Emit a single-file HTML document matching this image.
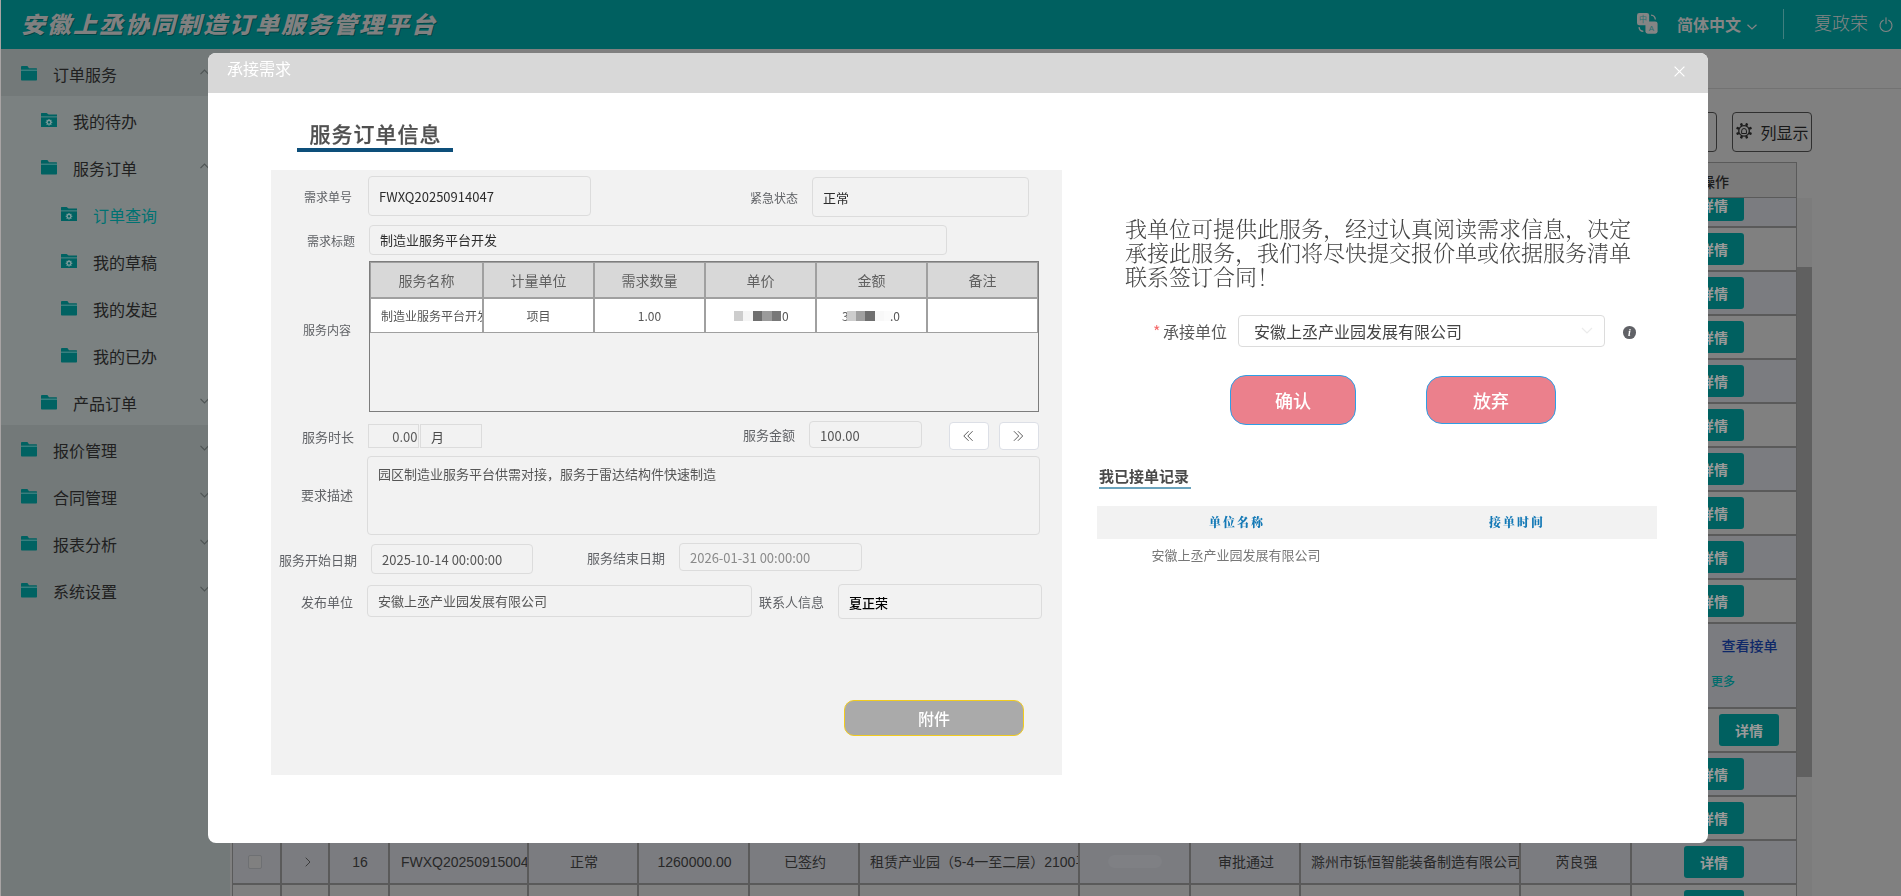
<!DOCTYPE html>
<html lang="zh-CN">
<head>
<meta charset="utf-8">
<title>安徽上丞协同制造订单服务管理平台</title>
<style>
*{box-sizing:border-box;margin:0;padding:0}
html,body{width:1901px;height:896px;overflow:hidden;background:#808080}
body{position:relative;font-family:"Noto Sans CJK SC","Liberation Sans",sans-serif;font-size:14px;color:#333}
.a{position:absolute;white-space:nowrap}
svg{position:absolute;overflow:visible}
/* header */
#hdr{left:0;top:0;width:1901px;height:49px;background:#006060}
#edge{left:0;top:0;width:1px;height:896px;background:#a8a4a4;z-index:3}
#hdr .ttl{left:21px;top:4px;font:italic 900 24px/38px "Noto Sans CJK SC","Liberation Sans",sans-serif;letter-spacing:2px;color:#808080;text-shadow:1px 1px 0 rgba(0,0,0,.3);transform:scaleY(.95);transform-origin:0 100%}
#hdr .lang{left:1677px;top:11px;font:700 16px/26px "Noto Sans CJK SC","Liberation Sans",sans-serif;color:#858585}
#hdr .user{left:1814px;top:8.5px;font:300 18px/26px "Noto Sans CJK SC","Liberation Sans",sans-serif;color:#858585}
#hdr .div{left:1783px;top:9px;width:1px;height:30px;background:#407f7f}
/* sidebar */
#side{left:1px;top:49px;width:229px;height:847px;background:#737979;z-index:1}
#side .sub{left:0;top:47px;width:229px;height:329px;background:#7b8181}
.mi{left:0;width:207px;height:47px;font:400 16px/47px "Noto Sans CJK SC","Liberation Sans",sans-serif;color:#202020}
.mi.act{color:#007272}
.mi svg{top:21px}
.mi span{position:absolute;top:2px}
/* main bg */
#main{left:208px;top:49px;width:1693px;height:847px;background:#808080;overflow:hidden}
.bt{font:400 14px/20px "Liberation Sans","Noto Sans CJK SC",sans-serif;color:#282828}
.vl{width:2px;background:#5a5a5a}
.hl{height:2px;background:#5a5a5a}
.row{left:24px;width:1565px}
.btn{width:60px;height:32px;border-radius:3px;background:#006060;color:#9a9a9a;font:700 14px/32px "Noto Sans CJK SC","Liberation Sans",sans-serif;text-align:center}
/* modal */
#modal{left:208px;top:53px;width:1500px;height:790px;background:#fff;border-radius:8px;overflow:hidden;will-change:transform;z-index:2}
#mh{left:0;top:0;width:1500px;height:40px;background:#d8d8d8}
#mh .t{left:19px;top:4px;font:400 16px/22px "Noto Sans CJK SC","Liberation Sans",sans-serif;color:#fff}
#lp{left:63px;top:117px;width:791px;height:605px;background:#f2f2f2}
.lb{font:400 12px/18px "Noto Sans CJK SC","Liberation Sans",sans-serif;color:#606266}
.lb13{font-size:13px}
.in{border:1px solid #dcdcdc;border-radius:4px;background:#f2f2f2;font:400 13px/18px "Noto Sans CJK SC","Liberation Sans",sans-serif;color:#2c2c2c}
.in span{position:absolute;left:10px}
.th{background:#d8d8d8;border:1px solid #a0a0a0;font:400 14px/20px "Noto Sans CJK SC","Liberation Sans",sans-serif;color:#606060;text-align:center;height:36px;padding-top:6.5px}
.td{background:#fff;border:1px solid #a0a0a0;font:400 12px/18px "Noto Sans CJK SC","Liberation Sans",sans-serif;color:#555;text-align:center;height:35px;padding-top:8px;overflow:hidden}
.px{position:absolute;height:10px}
</style>
</head>
<body>
<div id="hdr" class="a">
<div class="a ttl">安徽上丞协同制造订单服务管理平台</div>
<svg style="left:1637px;top:13px" width="20.6" height="20.8" viewBox="0 0 22 22">
<rect x="0" y="0" width="13" height="13" rx="2.5" fill="#858585"/>
<rect x="9" y="9" width="13" height="13" rx="2.5" fill="#858585"/>
<path d="M15 2.2 a5 5 0 0 1 4.6 4.6" fill="none" stroke="#858585" stroke-width="1.4"/>
<path d="M2.2 15 a5 5 0 0 0 4.6 4.6" fill="none" stroke="#858585" stroke-width="1.4"/>
<text x="6.5" y="9.7" font-size="8.5" font-weight="400" text-anchor="middle" fill="#2a7070" font-family='"Noto Sans CJK SC",sans-serif'>中</text>
<text x="15.5" y="19" font-size="8.5" font-weight="400" text-anchor="middle" fill="#2a7070" font-family='"Liberation Sans",sans-serif'>A</text>
</svg>
<div class="a lang">简体中文</div>
<svg style="left:1747px;top:24px" width="10" height="6" viewBox="0 0 10 6"><path d="M0.5 0.7 L5 5 L9.5 0.7" fill="none" stroke="#858585" stroke-width="1.2"/></svg>
<div class="a div"></div>
<div class="a user">夏政荣</div>
<svg style="left:1879px;top:16.5px" width="14" height="15" viewBox="0 0 14 15"><path d="M4.3 3.2 A6 6 0 1 0 9.7 3.2" fill="none" stroke="#858585" stroke-width="1.1" stroke-linecap="round"/><path d="M7 0.8 V6.6" stroke="#858585" stroke-width="1.1" stroke-linecap="round"/></svg>
</div>
<div id="side" class="a"><div class="a sub"></div>
<div class="a mi" style="top:0px"><svg style="left:20px;top:16.6px" width="16" height="14.5" viewBox="0 0 16 14.8" preserveAspectRatio="none"><path d="M0 .9 Q0 0 .9 0 H6.4 L8 2.2 H15.4 Q16 2.2 16 2.8 V3.9 H0 Z" fill="#006262"/><path d="M0 3.9 H16 V5 H0 Z" fill="#2f8080"/><path d="M0 5 H16 V14 Q16 14.8 15.2 14.8 H.8 Q0 14.8 0 14 Z" fill="#006262"/></svg><span style="left:52px">订单服务</span><svg style="left:198.5px;top:20px" width="9" height="6" viewBox="0 0 9 6"><path d="M.5 5.2 L4.5 1 L8.5 5.2" fill="none" stroke="#4e5454" stroke-width="1.1"/></svg></div>
<div class="a mi" style="top:47px"><svg style="left:40px;top:16.9px" width="16" height="14" viewBox="0 0 16 14"><path d="M0 .5 Q0 0 .5 0 H5.6 L7.6 1.6 H16 V3.4 H0 Z" fill="#006262"/><path d="M0 3.4 H16 V4.4 H0 Z" fill="#2f8080"/><path d="M0 4.4 H16 V14 H0 Z" fill="#006262"/><g transform="translate(8,9.3)"><circle cx="0" cy="0" r="1.9" fill="none" stroke="#809e9e" stroke-width="1.2"/><rect x="-.55" y="-3.3" width="1.1" height="1.2" fill="#809e9e" transform="rotate(0)"/><rect x="-.55" y="-3.3" width="1.1" height="1.2" fill="#809e9e" transform="rotate(45)"/><rect x="-.55" y="-3.3" width="1.1" height="1.2" fill="#809e9e" transform="rotate(90)"/><rect x="-.55" y="-3.3" width="1.1" height="1.2" fill="#809e9e" transform="rotate(135)"/><rect x="-.55" y="-3.3" width="1.1" height="1.2" fill="#809e9e" transform="rotate(180)"/><rect x="-.55" y="-3.3" width="1.1" height="1.2" fill="#809e9e" transform="rotate(225)"/><rect x="-.55" y="-3.3" width="1.1" height="1.2" fill="#809e9e" transform="rotate(270)"/><rect x="-.55" y="-3.3" width="1.1" height="1.2" fill="#809e9e" transform="rotate(315)"/></g></svg><span style="left:72px">我的待办</span></div>
<div class="a mi" style="top:94px"><svg style="left:40px;top:16.6px" width="16" height="14.5" viewBox="0 0 16 14.8" preserveAspectRatio="none"><path d="M0 .9 Q0 0 .9 0 H6.4 L8 2.2 H15.4 Q16 2.2 16 2.8 V3.9 H0 Z" fill="#006262"/><path d="M0 3.9 H16 V5 H0 Z" fill="#2f8080"/><path d="M0 5 H16 V14 Q16 14.8 15.2 14.8 H.8 Q0 14.8 0 14 Z" fill="#006262"/></svg><span style="left:72px">服务订单</span><svg style="left:198.5px;top:20px" width="9" height="6" viewBox="0 0 9 6"><path d="M.5 5.2 L4.5 1 L8.5 5.2" fill="none" stroke="#4e5454" stroke-width="1.1"/></svg></div>
<div class="a mi act" style="top:141px"><svg style="left:60px;top:16.9px" width="16" height="14" viewBox="0 0 16 14"><path d="M0 .5 Q0 0 .5 0 H5.6 L7.6 1.6 H16 V3.4 H0 Z" fill="#006262"/><path d="M0 3.4 H16 V4.4 H0 Z" fill="#2f8080"/><path d="M0 4.4 H16 V14 H0 Z" fill="#006262"/><g transform="translate(8,9.3)"><circle cx="0" cy="0" r="1.9" fill="none" stroke="#809e9e" stroke-width="1.2"/><rect x="-.55" y="-3.3" width="1.1" height="1.2" fill="#809e9e" transform="rotate(0)"/><rect x="-.55" y="-3.3" width="1.1" height="1.2" fill="#809e9e" transform="rotate(45)"/><rect x="-.55" y="-3.3" width="1.1" height="1.2" fill="#809e9e" transform="rotate(90)"/><rect x="-.55" y="-3.3" width="1.1" height="1.2" fill="#809e9e" transform="rotate(135)"/><rect x="-.55" y="-3.3" width="1.1" height="1.2" fill="#809e9e" transform="rotate(180)"/><rect x="-.55" y="-3.3" width="1.1" height="1.2" fill="#809e9e" transform="rotate(225)"/><rect x="-.55" y="-3.3" width="1.1" height="1.2" fill="#809e9e" transform="rotate(270)"/><rect x="-.55" y="-3.3" width="1.1" height="1.2" fill="#809e9e" transform="rotate(315)"/></g></svg><span style="left:92px">订单查询</span></div>
<div class="a mi" style="top:188px"><svg style="left:60px;top:16.9px" width="16" height="14" viewBox="0 0 16 14"><path d="M0 .5 Q0 0 .5 0 H5.6 L7.6 1.6 H16 V3.4 H0 Z" fill="#006262"/><path d="M0 3.4 H16 V4.4 H0 Z" fill="#2f8080"/><path d="M0 4.4 H16 V14 H0 Z" fill="#006262"/><g transform="translate(8,9.3)"><circle cx="0" cy="0" r="1.9" fill="none" stroke="#809e9e" stroke-width="1.2"/><rect x="-.55" y="-3.3" width="1.1" height="1.2" fill="#809e9e" transform="rotate(0)"/><rect x="-.55" y="-3.3" width="1.1" height="1.2" fill="#809e9e" transform="rotate(45)"/><rect x="-.55" y="-3.3" width="1.1" height="1.2" fill="#809e9e" transform="rotate(90)"/><rect x="-.55" y="-3.3" width="1.1" height="1.2" fill="#809e9e" transform="rotate(135)"/><rect x="-.55" y="-3.3" width="1.1" height="1.2" fill="#809e9e" transform="rotate(180)"/><rect x="-.55" y="-3.3" width="1.1" height="1.2" fill="#809e9e" transform="rotate(225)"/><rect x="-.55" y="-3.3" width="1.1" height="1.2" fill="#809e9e" transform="rotate(270)"/><rect x="-.55" y="-3.3" width="1.1" height="1.2" fill="#809e9e" transform="rotate(315)"/></g></svg><span style="left:92px">我的草稿</span></div>
<div class="a mi" style="top:235px"><svg style="left:60px;top:16.6px" width="16" height="14.5" viewBox="0 0 16 14.8" preserveAspectRatio="none"><path d="M0 .9 Q0 0 .9 0 H6.4 L8 2.2 H15.4 Q16 2.2 16 2.8 V3.9 H0 Z" fill="#006262"/><path d="M0 3.9 H16 V5 H0 Z" fill="#2f8080"/><path d="M0 5 H16 V14 Q16 14.8 15.2 14.8 H.8 Q0 14.8 0 14 Z" fill="#006262"/></svg><span style="left:92px">我的发起</span></div>
<div class="a mi" style="top:282px"><svg style="left:60px;top:16.6px" width="16" height="14.5" viewBox="0 0 16 14.8" preserveAspectRatio="none"><path d="M0 .9 Q0 0 .9 0 H6.4 L8 2.2 H15.4 Q16 2.2 16 2.8 V3.9 H0 Z" fill="#006262"/><path d="M0 3.9 H16 V5 H0 Z" fill="#2f8080"/><path d="M0 5 H16 V14 Q16 14.8 15.2 14.8 H.8 Q0 14.8 0 14 Z" fill="#006262"/></svg><span style="left:92px">我的已办</span></div>
<div class="a mi" style="top:329px"><svg style="left:40px;top:16.6px" width="16" height="14.5" viewBox="0 0 16 14.8" preserveAspectRatio="none"><path d="M0 .9 Q0 0 .9 0 H6.4 L8 2.2 H15.4 Q16 2.2 16 2.8 V3.9 H0 Z" fill="#006262"/><path d="M0 3.9 H16 V5 H0 Z" fill="#2f8080"/><path d="M0 5 H16 V14 Q16 14.8 15.2 14.8 H.8 Q0 14.8 0 14 Z" fill="#006262"/></svg><span style="left:72px">产品订单</span><svg style="left:198.5px;top:20px" width="9" height="6" viewBox="0 0 9 6"><path d="M.5 .8 L4.5 5 L8.5 .8" fill="none" stroke="#4e5454" stroke-width="1.1"/></svg></div>
<div class="a mi" style="top:376px"><svg style="left:20px;top:16.6px" width="16" height="14.5" viewBox="0 0 16 14.8" preserveAspectRatio="none"><path d="M0 .9 Q0 0 .9 0 H6.4 L8 2.2 H15.4 Q16 2.2 16 2.8 V3.9 H0 Z" fill="#006262"/><path d="M0 3.9 H16 V5 H0 Z" fill="#2f8080"/><path d="M0 5 H16 V14 Q16 14.8 15.2 14.8 H.8 Q0 14.8 0 14 Z" fill="#006262"/></svg><span style="left:52px">报价管理</span><svg style="left:198.5px;top:20px" width="9" height="6" viewBox="0 0 9 6"><path d="M.5 .8 L4.5 5 L8.5 .8" fill="none" stroke="#4e5454" stroke-width="1.1"/></svg></div>
<div class="a mi" style="top:423px"><svg style="left:20px;top:16.6px" width="16" height="14.5" viewBox="0 0 16 14.8" preserveAspectRatio="none"><path d="M0 .9 Q0 0 .9 0 H6.4 L8 2.2 H15.4 Q16 2.2 16 2.8 V3.9 H0 Z" fill="#006262"/><path d="M0 3.9 H16 V5 H0 Z" fill="#2f8080"/><path d="M0 5 H16 V14 Q16 14.8 15.2 14.8 H.8 Q0 14.8 0 14 Z" fill="#006262"/></svg><span style="left:52px">合同管理</span><svg style="left:198.5px;top:20px" width="9" height="6" viewBox="0 0 9 6"><path d="M.5 .8 L4.5 5 L8.5 .8" fill="none" stroke="#4e5454" stroke-width="1.1"/></svg></div>
<div class="a mi" style="top:470px"><svg style="left:20px;top:16.6px" width="16" height="14.5" viewBox="0 0 16 14.8" preserveAspectRatio="none"><path d="M0 .9 Q0 0 .9 0 H6.4 L8 2.2 H15.4 Q16 2.2 16 2.8 V3.9 H0 Z" fill="#006262"/><path d="M0 3.9 H16 V5 H0 Z" fill="#2f8080"/><path d="M0 5 H16 V14 Q16 14.8 15.2 14.8 H.8 Q0 14.8 0 14 Z" fill="#006262"/></svg><span style="left:52px">报表分析</span><svg style="left:198.5px;top:20px" width="9" height="6" viewBox="0 0 9 6"><path d="M.5 .8 L4.5 5 L8.5 .8" fill="none" stroke="#4e5454" stroke-width="1.1"/></svg></div>
<div class="a mi" style="top:517px"><svg style="left:20px;top:16.6px" width="16" height="14.5" viewBox="0 0 16 14.8" preserveAspectRatio="none"><path d="M0 .9 Q0 0 .9 0 H6.4 L8 2.2 H15.4 Q16 2.2 16 2.8 V3.9 H0 Z" fill="#006262"/><path d="M0 3.9 H16 V5 H0 Z" fill="#2f8080"/><path d="M0 5 H16 V14 Q16 14.8 15.2 14.8 H.8 Q0 14.8 0 14 Z" fill="#006262"/></svg><span style="left:52px">系统设置</span><svg style="left:198.5px;top:20px" width="9" height="6" viewBox="0 0 9 6"><path d="M.5 .8 L4.5 5 L8.5 .8" fill="none" stroke="#4e5454" stroke-width="1.1"/></svg></div>
</div>
<div id="edge" class="a"></div>
<div id="main" class="a">
<div class="a" style="left:0;top:39px;width:1693px;height:1px;background:#727272"></div>
<div class="a" style="left:1444px;top:63px;width:65px;height:40px;border:1px solid #303030;border-radius:4px"></div>
<div class="a" style="left:1524px;top:63px;width:80px;height:40px;border:1px solid #303030;border-radius:4px"></div>
<svg style="left:1528px;top:74px" width="16" height="16" viewBox="-8 -8 16 16"><g transform="translate(0.05,-0.1)"><circle cx="0" cy="0" r="5.3" fill="none" stroke="#1c1c1c" stroke-width="1.3"/><rect x="-1.2" y="-8.1" width="2.4" height="2.7" rx=".4" fill="#1c1c1c" transform="rotate(22.5)"/><rect x="-1.2" y="-8.1" width="2.4" height="2.7" rx=".4" fill="#1c1c1c" transform="rotate(67.5)"/><rect x="-1.2" y="-8.1" width="2.4" height="2.7" rx=".4" fill="#1c1c1c" transform="rotate(112.5)"/><rect x="-1.2" y="-8.1" width="2.4" height="2.7" rx=".4" fill="#1c1c1c" transform="rotate(157.5)"/><rect x="-1.2" y="-8.1" width="2.4" height="2.7" rx=".4" fill="#1c1c1c" transform="rotate(202.5)"/><rect x="-1.2" y="-8.1" width="2.4" height="2.7" rx=".4" fill="#1c1c1c" transform="rotate(247.5)"/><rect x="-1.2" y="-8.1" width="2.4" height="2.7" rx=".4" fill="#1c1c1c" transform="rotate(292.5)"/><rect x="-1.2" y="-8.1" width="2.4" height="2.7" rx=".4" fill="#1c1c1c" transform="rotate(337.5)"/><path d="M-2.4 2.6 V0 A2.4 2.4 0 0 1 2.4 0 V2.6 Z" fill="none" stroke="#1c1c1c" stroke-width="1"/></g></svg>
<div class="a" style="left:1552.5px;top:71px;font:400 16px/24px 'Noto Sans CJK SC','Liberation Sans',sans-serif;color:#181818">列显示</div>
<div class="a" style="left:24px;top:113px;width:1565px;height:36px;background:#7a7a7a;border-top:1px solid #5a5a5a;border-bottom:1px solid #5a5a5a"></div>
<div class="a row" style="top:149px;height:28px;background:#7b7c80"></div>
<div class="a hl" style="left:24px;top:177px;width:1565px"></div>
<div class="a row" style="top:179px;height:42px;background:#808080"></div>
<div class="a hl" style="left:24px;top:221px;width:1565px"></div>
<div class="a row" style="top:223px;height:42px;background:#7b7c80"></div>
<div class="a hl" style="left:24px;top:265px;width:1565px"></div>
<div class="a row" style="top:267px;height:42px;background:#808080"></div>
<div class="a hl" style="left:24px;top:309px;width:1565px"></div>
<div class="a row" style="top:311px;height:42px;background:#7b7c80"></div>
<div class="a hl" style="left:24px;top:353px;width:1565px"></div>
<div class="a row" style="top:355px;height:42px;background:#808080"></div>
<div class="a hl" style="left:24px;top:397px;width:1565px"></div>
<div class="a row" style="top:399px;height:42px;background:#7b7c80"></div>
<div class="a hl" style="left:24px;top:441px;width:1565px"></div>
<div class="a row" style="top:443px;height:42px;background:#808080"></div>
<div class="a hl" style="left:24px;top:485px;width:1565px"></div>
<div class="a row" style="top:487px;height:42px;background:#7b7c80"></div>
<div class="a hl" style="left:24px;top:529px;width:1565px"></div>
<div class="a row" style="top:531px;height:42px;background:#808080"></div>
<div class="a hl" style="left:24px;top:573px;width:1565px"></div>
<div class="a row" style="top:575px;height:83px;background:#7b7c80"></div>
<div class="a hl" style="left:24px;top:658px;width:1565px"></div>
<div class="a row" style="top:660px;height:42px;background:#808080"></div>
<div class="a hl" style="left:24px;top:702px;width:1565px"></div>
<div class="a row" style="top:704px;height:42px;background:#7b7c80"></div>
<div class="a hl" style="left:24px;top:746px;width:1565px"></div>
<div class="a row" style="top:748px;height:42px;background:#808080"></div>
<div class="a hl" style="left:24px;top:790px;width:1565px"></div>
<div class="a row" style="top:792px;height:42px;background:#7b7c80"></div>
<div class="a hl" style="left:24px;top:834px;width:1565px"></div>
<div class="a row" style="top:836px;height:42px;background:#808080"></div>
<div class="a hl" style="left:24px;top:878px;width:1565px"></div>
<div class="a vl" style="left:24px;top:113px;height:740px;width:1px"></div>
<div class="a vl" style="left:72px;top:113px;height:740px"></div>
<div class="a vl" style="left:120px;top:113px;height:740px"></div>
<div class="a vl" style="left:180px;top:113px;height:740px"></div>
<div class="a vl" style="left:319px;top:113px;height:740px"></div>
<div class="a vl" style="left:429px;top:113px;height:740px"></div>
<div class="a vl" style="left:540px;top:113px;height:740px"></div>
<div class="a vl" style="left:650px;top:113px;height:740px"></div>
<div class="a vl" style="left:870px;top:113px;height:740px"></div>
<div class="a vl" style="left:981px;top:113px;height:740px"></div>
<div class="a vl" style="left:1091px;top:113px;height:740px"></div>
<div class="a vl" style="left:1311px;top:113px;height:740px"></div>
<div class="a vl" style="left:1422px;top:113px;height:740px"></div>
<div class="a" style="left:1588px;top:113px;width:1px;height:740px;background:#5a5a5a"></div>
<div class="a" style="left:1589px;top:149px;width:15px;height:700px;background:#7c7c7c"></div>
<div class="a" style="left:1589px;top:218px;width:15px;height:510px;background:#606060"></div>
<div class="a btn" style="left:1476px;top:140px">详情</div>
<div class="a" style="left:1424px;top:114px;width:164px;height:35px;background:#7a7a7a;border-bottom:1px solid #5a5a5a"></div>
<div class="a" style="left:1493px;top:121.5px;font:500 14px/20px 'Noto Sans CJK SC','Liberation Sans',sans-serif;color:#1c1c1c">操作</div>
<div class="a btn" style="left:1476px;top:184px">详情</div>
<div class="a btn" style="left:1476px;top:228px">详情</div>
<div class="a btn" style="left:1476px;top:272px">详情</div>
<div class="a btn" style="left:1476px;top:316px">详情</div>
<div class="a btn" style="left:1476px;top:360px">详情</div>
<div class="a btn" style="left:1476px;top:404px">详情</div>
<div class="a btn" style="left:1476px;top:448px">详情</div>
<div class="a btn" style="left:1476px;top:492px">详情</div>
<div class="a btn" style="left:1476px;top:536px">详情</div>
<div class="a" style="left:1513.5px;top:586px;font:500 14px/20px 'Noto Sans CJK SC','Liberation Sans',sans-serif;color:#0e2868">查看接单</div>
<div class="a" style="left:1503px;top:623px;font:500 12px/18px 'Noto Sans CJK SC','Liberation Sans',sans-serif;color:#006c6c">更多</div>
<div class="a btn" style="left:1511px;top:665px">详情</div>
<div class="a btn" style="left:1476px;top:709px">详情</div>
<div class="a btn" style="left:1476px;top:753px">详情</div>
<div class="a btn" style="left:1476px;top:797px">详情</div>
<div class="a btn" style="left:1476px;top:841px">详情</div>
<div class="a" style="left:40px;top:806px;width:14px;height:14px;border:1px solid #6e7073;border-radius:2px;background:#808080"></div>
<svg style="left:97px;top:808px" width="6" height="10" viewBox="0 0 6 10"><path d="M.7 .7 L5 5 L.7 9.3" fill="none" stroke="#3c3c3c" stroke-width="1"/></svg>
<div class="a bt" style="left:123px;top:803px;width:58px;text-align:center;overflow:hidden">16</div>
<div class="a bt" style="left:183px;top:803px;width:136px;overflow:hidden;padding-left:10px">FWXQ20250915004</div>
<div class="a bt" style="left:322px;top:803px;width:108px;text-align:center;overflow:hidden">正常</div>
<div class="a bt" style="left:432px;top:803px;width:109px;text-align:center;overflow:hidden">1260000.00</div>
<div class="a bt" style="left:543px;top:803px;width:108px;text-align:center;overflow:hidden">已签约</div>
<div class="a bt" style="left:653px;top:803px;width:217px;overflow:hidden;padding-left:9px">租赁产业园（5-4一至二层）2100平方米</div>
<div class="a" style="left:900px;top:806px;width:54px;height:13px;border-radius:7px;background:#7f8084"></div>
<div class="a bt" style="left:984px;top:803px;width:108px;text-align:center;overflow:hidden">审批通过</div>
<div class="a bt" style="left:1094px;top:803px;width:217px;overflow:hidden;padding-left:9px">滁州市铄恒智能装备制造有限公司</div>
<div class="a bt" style="left:1314px;top:803px;width:109px;text-align:center;overflow:hidden">芮良强</div>
</div>
<div id="modal" class="a">
<div id="mh" class="a"><div class="a t">承接需求</div>
<svg style="left:1466px;top:12.5px" width="11" height="11" viewBox="0 0 11 11"><path d="M.6 .6 L10.4 10.4 M10.4 .6 L.6 10.4" stroke="#fff" stroke-width="1.2" fill="none"/></svg></div>
<div class="a" style="left:89px;top:62px;width:156px;height:37px;border-bottom:4px solid #0d4f7a;text-align:center;font:500 21px/37px 'Noto Sans CJK SC','Liberation Sans',sans-serif;letter-spacing:1px;padding-left:1px;color:#505050;-webkit-text-stroke:.25px #505050">服务订单信息</div>
<div id="lp" class="a">
<div class="a lb" style="left:33px;top:17.5px">需求单号</div>
<div class="a in" style="left:97px;top:6px;width:223px;height:40px;"><span style="top:11px;">FWXQ20250914047</span></div>
<div class="a lb" style="left:479px;top:18.5px">紧急状态</div>
<div class="a in" style="left:541px;top:7px;width:217px;height:40px;"><span style="top:10.5px;">正常</span></div>
<div class="a lb" style="left:36px;top:62px">需求标题</div>
<div class="a in" style="left:98px;top:55px;width:578px;height:30px;"><span style="top:5px;">制造业服务平台开发</span></div>
<div class="a lb" style="left:32px;top:151px">服务内容</div>
<div class="a" style="left:98px;top:91px;width:670px;height:151px;border:1px solid #7d7d7d"></div>
<div class="a th" style="left:99px;top:92px;width:113px">服务名称</div>
<div class="a th" style="left:212px;top:92px;width:111px">计量单位</div>
<div class="a th" style="left:323px;top:92px;width:111px">需求数量</div>
<div class="a th" style="left:434px;top:92px;width:111px">单价</div>
<div class="a th" style="left:545px;top:92px;width:111px">金额</div>
<div class="a th" style="left:656px;top:92px;width:111px">备注</div>
<div class="a td" style="left:99px;top:128px;width:113px"><span style="position:absolute;left:10px">制造业服务平台开发</span></div>
<div class="a td" style="left:212px;top:128px;width:111px">项目</div>
<div class="a td" style="left:323px;top:128px;width:111px">1.00</div>
<div class="a td" style="left:434px;top:128px;width:111px"></div>
<div class="a td" style="left:545px;top:128px;width:111px"></div>
<div class="a td" style="left:656px;top:128px;width:111px"></div>
<div class="a px" style="left:463.0px;top:141px;width:9.6px;height:10px;background:#cdcdcd"></div>
<div class="a px" style="left:472.4px;top:141px;width:9.6px;height:10px;background:#f5f5f5"></div>
<div class="a px" style="left:481.8px;top:141px;width:9.6px;height:10px;background:#6e6e6e"></div>
<div class="a px" style="left:491.2px;top:141px;width:9.6px;height:10px;background:#9b9b9b"></div>
<div class="a px" style="left:500.6px;top:141px;width:9.6px;height:10px;background:#787878"></div>
<div class="a" style="left:511px;top:137px;font:400 12px/18px 'Noto Sans CJK SC','Liberation Sans',sans-serif;color:#555">0</div>
<div class="a" style="left:571px;top:137px;font:400 12px/18px 'Noto Sans CJK SC','Liberation Sans',sans-serif;color:#5a5a5a">3</div>
<div class="a px" style="left:576.0px;top:141px;width:9.4px;height:10px;background:#cdcdcd"></div>
<div class="a px" style="left:585.2px;top:141px;width:9.4px;height:10px;background:#a0a0a0"></div>
<div class="a px" style="left:594.4px;top:141px;width:9.4px;height:10px;background:#6e6e6e"></div>
<div class="a px" style="left:603.6px;top:141px;width:9.4px;height:10px;background:#f8f8f8"></div>
<div class="a px" style="left:612.8px;top:141px;width:9.4px;height:10px;background:#fbfbfb"></div>
<div class="a" style="left:619px;top:137px;font:400 12px/18px 'Noto Sans CJK SC','Liberation Sans',sans-serif;color:#555">.0</div>
<div class="a lb lb13" style="left:31px;top:257.5px">服务时长</div>
<div class="a in" style="left:97px;top:254px;width:51px;height:24px;border-radius:0;text-align:right;padding-right:.5px;line-height:24px;color:#5a5a5a">0.00</div>
<div class="a in" style="left:149px;top:254px;width:62px;height:24px;border-radius:0;padding-left:10px;line-height:23px;color:#4a4a4a">月</div>
<div class="a lb lb13" style="left:472px;top:255.7px">服务金额</div>
<div class="a in" style="left:538px;top:251px;width:113px;height:27px;"><span style="top:4.5px;color:#555">100.00</span></div>
<div class="a" style="left:678px;top:252px;width:40px;height:28px;border:1px solid #dcdfe6;border-radius:4px;background:#fff"><svg style="left:13.2px;top:8px" width="10.5" height="10" viewBox="0 0 10.5 10"><path d="M5.6 .2 L.8 5 L5.6 9.8 M9.6 .2 L4.8 5 L9.6 9.8" fill="none" stroke="#5e5e5e" stroke-width="1"/></svg></div>
<div class="a" style="left:728px;top:252px;width:40px;height:28px;border:1px solid #dcdfe6;border-radius:4px;background:#fff"><svg style="left:13.4px;top:8px" width="10.5" height="10" viewBox="0 0 10.5 10"><path d="M.9 .2 L5.7 5 L.9 9.8 M4.9 .2 L9.7 5 L4.9 9.8" fill="none" stroke="#5e5e5e" stroke-width="1"/></svg></div>
<div class="a lb lb13" style="left:30px;top:316.2px">要求描述</div>
<div class="a in" style="left:96px;top:286px;width:673px;height:79px"><span style="top:7.5px;color:#555">园区制造业服务平台供需对接，服务于雷达结构件快速制造</span></div>
<div class="a lb lb13" style="left:8px;top:380.5px">服务开始日期</div>
<div class="a in" style="left:100px;top:374px;width:162px;height:30px;"><span style="top:6.25px;color:#555">2025-10-14 00:00:00</span></div>
<div class="a lb lb13" style="left:316px;top:379px">服务结束日期</div>
<div class="a in" style="left:408px;top:373px;width:183px;height:28px;"><span style="top:5px;color:#8a8a8a">2026-01-31 00:00:00</span></div>
<div class="a lb lb13" style="left:30px;top:423px">发布单位</div>
<div class="a in" style="left:96px;top:415px;width:385px;height:32px;"><span style="top:6px;color:#555">安徽上丞产业园发展有限公司</span></div>
<div class="a lb lb13" style="left:488px;top:423px">联系人信息</div>
<div class="a in" style="left:567px;top:414px;width:204px;height:35px;"><span style="top:8.5px;color:#000;font-weight:500">夏正荣</span></div>
<div class="a" style="left:573px;top:530px;width:180px;height:36px;border:1px solid #f2cc1e;border-radius:10px;background:#aaa;color:#fff;font:500 16px/34px 'Noto Sans CJK SC','Liberation Sans',sans-serif;text-align:center">附件</div>
</div>
<div class="a" style="left:917px;top:163px;width:520px;white-space:normal;font:300 22px/24px 'Noto Serif CJK SC','Liberation Serif',serif;color:#444">我单位可提供此服务，经过认真阅读需求信息，决定承接此服务，我们将尽快提交报价单或依据服务清单联系签订合同！</div>
<div class="a" style="left:945px;top:267px;font:400 16px/22px 'Noto Sans CJK SC','Liberation Sans',sans-serif;color:#f56c6c">*</div>
<div class="a" style="left:955px;top:267px;font:400 16px/22px 'Noto Sans CJK SC','Liberation Sans',sans-serif;color:#5a5a5a">承接单位</div>
<div class="a" style="left:1030px;top:262px;width:367px;height:32px;border:1px solid #dcdcdc;border-radius:4px;background:#fff"><span class="a" style="left:15px;top:4px;font:400 16px/22px 'Noto Sans CJK SC','Liberation Sans',sans-serif;color:#444">安徽上丞产业园发展有限公司</span><svg style="left:342px;top:11px" width="12" height="7" viewBox="0 0 12 7"><path d="M1 1 L6 6 L11 1" fill="none" stroke="#ebebeb" stroke-width="1.2"/></svg></div>
<div class="a" style="left:1415px;top:273.4px;width:12.6px;height:12.6px;border-radius:50%;background:#606166;color:#fff;font:italic 700 10px/13px 'Liberation Serif',serif;text-align:center">i</div>
<div class="a" style="left:1022px;top:322px;width:126px;height:50px;border:1px solid #2e9fe6;border-radius:16px;background:#eb808c;color:#fff;font:500 18px/48px 'Noto Sans CJK SC','Liberation Sans',sans-serif;text-align:center">确认</div>
<div class="a" style="left:1218px;top:323px;width:130px;height:48px;border:1px solid #2e9fe6;border-radius:16px;background:#eb808c;color:#fff;font:500 18px/47px 'Noto Sans CJK SC','Liberation Sans',sans-serif;text-align:center">放弃</div>
<div class="a" style="left:891px;top:412px;width:92px;height:24px;border-bottom:2px solid #6aa3bd;font:700 15px/21px 'Noto Sans CJK SC','Liberation Sans',sans-serif;color:#4a4a4a;padding-left:0">我已接单记录</div>
<div class="a" style="left:889px;top:453px;width:560px;height:33px;background:#f2f2f2"></div>
<div class="a" style="left:889px;top:460px;width:280px;text-align:center;font:900 12px/18px 'Noto Serif CJK SC','Liberation Serif',serif;color:#1479b6;letter-spacing:2px">单位名称</div>
<div class="a" style="left:1169px;top:460px;width:280px;text-align:center;font:900 12px/18px 'Noto Serif CJK SC','Liberation Serif',serif;color:#1479b6;letter-spacing:2px">接单时间</div>
<div class="a" style="left:888px;top:493px;width:280px;text-align:center;font:400 13px/18px 'Noto Sans CJK SC','Liberation Sans',sans-serif;color:#777">安徽上丞产业园发展有限公司</div>
</div>
</body>
</html>
